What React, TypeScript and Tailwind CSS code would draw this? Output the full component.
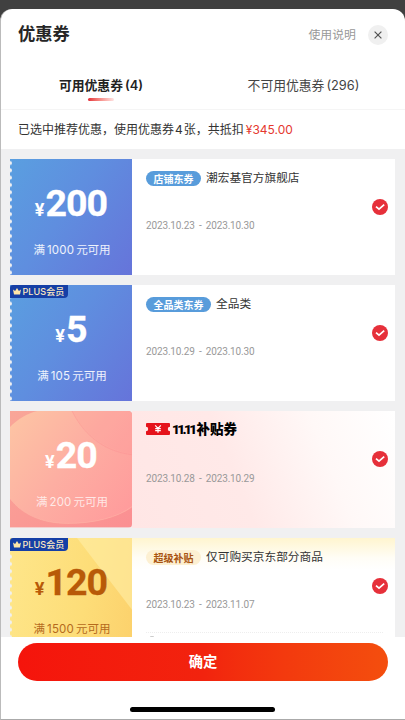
import React from 'react';
import clsx from 'clsx';

type Theme = 'blue' | 'pink' | 'gold';

interface Coupon {
  id: number;
  theme: Theme;
  plus?: boolean;
  amount: string;
  limit: string;
  tag?: string;
  title: string;
  start: string;
  end: string;
}

const coupons: Coupon[] = [
  { id: 1, theme: 'blue', amount: '200', limit: '1000', tag: '店铺东券', title: '潮宏基官方旗舰店', start: '2023.10.23', end: '2023.10.30' },
  { id: 2, theme: 'blue', plus: true, amount: '5', limit: '105', tag: '全品类东券', title: '全品类', start: '2023.10.29', end: '2023.10.30' },
  { id: 3, theme: 'pink', amount: '20', limit: '200', title: '补贴券', start: '2023.10.28', end: '2023.10.29' },
  { id: 4, theme: 'gold', plus: true, amount: '120', limit: '1500', tag: '超级补贴', title: '仅可购买京东部分商品', start: '2023.10.23', end: '2023.11.07' },
];

const stubStyles: Record<Theme, string> = {
  blue: 'bg-linear-[125deg,#5a9fe0_0%,#5f8edf_45%,#6674da_100%] text-white',
  pink: 'text-white',
  gold: 'bg-linear-[100deg,#fee68a_0%,#fddd78_60%,#fcd16c_100%] text-[#b85a08]',
};

const limitStyles: Record<Theme, string> = {
  blue: 'text-white/90',
  pink: 'text-white/75',
  gold: 'text-[#b56a1c]',
};

const bodyStyles: Record<Theme, string> = {
  blue: 'bg-white',
  pink: 'bg-linear-[68deg,#ffe6e5_0%,#ffe9e8_40%,#fff8f7_72%,#ffffff_100%]',
  gold: 'bg-linear-[180deg,#fff5cf_0px,#fffdf6_20px,#ffffff_32px]',
};

const PinkPattern: React.FC = () => (
  <svg className="absolute inset-0 h-full w-full" viewBox="0 0 122 117" preserveAspectRatio="none">
    <defs>
      <linearGradient id="pinkBase" x1="0" y1="0" x2="1" y2="1">
        <stop offset="0" stopColor="#f9a698" />
        <stop offset="1" stopColor="#fb8f92" />
      </linearGradient>
      <linearGradient id="pinkDisc" x1="0" y1="0.1" x2="1" y2="0.8">
        <stop offset="0" stopColor="#fdc4a4" />
        <stop offset="0.5" stopColor="#fdaea2" />
        <stop offset="1" stopColor="#ff9c9c" />
      </linearGradient>
    </defs>
    <rect width="122" height="117" fill="url(#pinkBase)" />
    <path d="M0 16C12 4 26-2 44-2H124V96C108 107 84 113 58 113C32 113 12 104 0 88Z" fill="url(#pinkDisc)" />
    <path d="M62 0C72 18 88 38 122 43V0Z" fill="#ff9095" opacity=".18" />
    <path d="M62 0C72 20 90 40 122 44" fill="none" stroke="#fb8a8e" strokeWidth=".7" opacity=".5" />
    <path d="M0 88C12 104 32 113 58 113C84 113 108 107 122 96" fill="none" stroke="#ffb9a8" strokeWidth="1" opacity=".5" />
  </svg>
);

const GoldPattern: React.FC = () => (
  <svg className="absolute inset-0 h-full w-full" viewBox="0 0 122 117" preserveAspectRatio="none">
    <path d="M67 0H122V72Z" fill="#ffeea6" opacity=".6" />
  </svg>
);

// perforated left edge of the stub
const Perforation: React.FC<{ theme: Theme }> = ({ theme }) => (
  <svg className="absolute top-0 left-0 h-full w-[3px]">
    <defs>
      <pattern id={`perf-${theme}`} width="3" height="7.3" patternUnits="userSpaceOnUse">
        <circle cx="0" cy="4" r="2" fill="#f0f0f1" />
      </pattern>
    </defs>
    <rect width="3" height="100%" fill={`url(#perf-${theme})`} />
  </svg>
);

const PlusBadge: React.FC = () => (
  <div className="absolute top-0 left-0 flex h-[13px] w-[57.5px] items-center rounded-tl-[3px] rounded-br-[4px] bg-[#153fa6] pl-[2.5px] text-[#ffe9c0]">
    <svg className="h-[7px] w-[8px] shrink-0" viewBox="0 0 8 7">
      <path d="M0 1.6L2.1 3L4 0L5.9 3L8 1.6L7 6.6H1Z" fill="#ffe6a8" />
    </svg>
    <span className="ml-[2px] text-[9px] leading-none font-medium tracking-[0.1px] whitespace-nowrap">PLUS会员</span>
  </div>
);

const TicketIcon: React.FC = () => (
  <svg className="h-[12px] w-[24px] shrink-0" viewBox="0 0 24 12">
    <path d="M1 0H23Q24 0 24 1V3.8A2.2 2.2 0 0 0 24 8.2V11Q24 12 23 12H1Q0 12 0 11V8.2A2.2 2.2 0 0 0 0 3.8V1Q0 0 1 0Z" fill="#e5131b" />
    <path d="M9.2 2.3L12 5.3L14.8 2.3M12 5.3V9.8M9.2 5.6H14.8M9.2 7.7H14.8" fill="none" stroke="#fff" strokeWidth="1.2" />
  </svg>
);

const CheckIcon: React.FC = () => (
  <svg className="h-4 w-4 shrink-0" viewBox="0 0 16 16">
    <circle cx="8" cy="8" r="8" fill="#e6303a" />
    <path d="M4 7.6L7 10.2L12.2 5.6" fill="none" stroke="#fff" strokeWidth="1.7" />
  </svg>
);

const CouponCard: React.FC<{ coupon: Coupon }> = ({ coupon }) => {
  const { theme, plus, amount, limit, tag, title, start, end } = coupon;

  return (
    <div className="flex h-[116.4px] w-[385px] shrink-0">
      <div className={clsx('relative flex w-[122px] shrink-0 flex-col items-center', stubStyles[theme])}>
        {theme === 'pink' && (
          <div className="absolute inset-0 overflow-hidden rounded-r-[4px]">
            <PinkPattern />
          </div>
        )}
        {theme === 'gold' && <GoldPattern />}
        {theme !== 'pink' && <Perforation theme={theme} />}
        {plus && <PlusBadge />}
        <div className="relative mt-[24px] flex h-[40px] items-baseline font-['Roboto'] font-bold">
          <span className="mr-[1px] text-[18px] leading-[40px]">¥</span>
          <span className="text-[37.5px] leading-[40px] tracking-[-0.9px] [-webkit-text-stroke:0.3px_currentColor]">{amount}</span>
        </div>
        <div className={clsx('relative mt-[18px] ml-[2px] text-[11.5px] leading-[18px] whitespace-nowrap', limitStyles[theme])}>
          满<span className="mx-[2px] tracking-[0.2px]">{limit}</span>元可用
        </div>
      </div>

      <div className={clsx('relative flex grow items-start pl-[14px]', bodyStyles[theme])}>
        <div className="grow">
          <div className="mt-[11px] flex h-[18px] items-center">
            {theme === 'pink' ? (
              <div className="-mt-[4px] flex items-center">
                <TicketIcon />
                <span className="ml-[2px] flex items-center font-black text-black">
                  <span className="font-['Roboto'] text-[13.5px] tracking-[-2.6px]">11.11</span>
                  <span className="ml-[2px] text-[13.5px]">{title}</span>
                </span>
              </div>
            ) : (
              <>
                <span
                  className={clsx(
                    'flex h-[15px] items-center rounded-full px-[7.5px] text-[10px] leading-none font-bold whitespace-nowrap',
                    theme === 'gold' ? 'bg-[#fdf0d2] text-[#a8530f]' : 'bg-[#589cdb] text-white',
                  )}
                >
                  {tag}
                </span>
                <span className="ml-[5px] text-[11.7px] whitespace-nowrap text-[#333]">{title}</span>
              </>
            )}
          </div>
          <div className="mt-[29.5px] flex font-['Roboto'] text-[10px] leading-[18px] tracking-[-0.15px] whitespace-nowrap text-[#999]">
            <span>{start}</span>
            <span className="w-[11px] text-center">-</span>
            <span>{end}</span>
          </div>
        </div>
        <div className="mt-[40px] mr-[7px]">
          <CheckIcon />
        </div>
        {theme === 'gold' && (
          <>
            <div className="absolute top-[94px] right-3 left-[14px] border-t border-dotted border-[#eee]" />
            <div className="absolute top-[98px] left-[18px] h-[2px] w-[4px] rounded-full bg-[#ccc]" />
          </>
        )}
      </div>
    </div>
  );
};

export default function App() {
  return (
    <div className="h-[720px] w-[405px] overflow-hidden bg-[#404040] pt-[9px] font-['Inter','Noto_Sans_CJK_SC',sans-serif]">
      <div className="flex h-[711px] flex-col overflow-hidden rounded-t-[12px] border-b border-l border-b-[#aaa] border-l-[#bbb] bg-white">
        <header className="flex h-[52px] shrink-0 items-center pr-[17px] pl-[17px]">
          <h1 className="-mt-[2px] grow text-[17.3px] font-bold text-[#262626]">优惠券</h1>
          <span className="text-[11.9px] text-[#999]">使用说明</span>
          <button className="ml-[12px] flex h-5 w-5 items-center justify-center rounded-full bg-[#f0f0f0]">
            <svg className="h-[8px] w-[8px]" viewBox="0 0 8 8">
              <path d="M.6.6L7.4 7.4M7.4.6L.6 7.4" stroke="#555" strokeWidth="1.2" />
            </svg>
          </button>
        </header>

        <nav className="flex h-[49px] shrink-0 border-b border-[#f5f5f5] text-[12.8px] whitespace-nowrap">
          <div className="relative flex w-[200px] justify-center pt-[15px] leading-5 font-semibold text-[#222]">
            可用优惠券<span className="ml-[2px]">(4)</span>
            <div className="absolute top-[37px] left-[87px] h-[3px] w-[26px] rounded-full bg-linear-to-r from-[#e22b38] to-[#fde3e3]" />
          </div>
          <div className="flex w-[204px] justify-center pt-[15px] pl-px leading-5 text-[#444]">
            不可用优惠券<span className="ml-[2px]">(296)</span>
          </div>
        </nav>

        <p className="flex h-[39px] shrink-0 items-center pl-[17px] text-[12px] whitespace-nowrap text-[#333]">
          已选中推荐优惠，使用优惠券<span className="mr-px ml-[1px]">4</span>张，共抵扣
          <span className="ml-[2px] text-[#e5392f]">¥345.00</span>
        </p>

        <main className="flex h-[488px] shrink-0 flex-col gap-[10px] overflow-hidden bg-[#f0f0f1] pt-[9.5px] pl-[9px]">
          {coupons.map((coupon) => (
            <CouponCard key={coupon.id} coupon={coupon} />
          ))}
        </main>

        <footer className="flex grow flex-col items-center bg-white pt-[6px]">
          <button className="h-[37.5px] w-[370px] rounded-full bg-linear-to-r from-[#f5140c] via-[#f2230e] to-[#f44e0e] text-[14.3px] font-bold text-white">确定</button>
          <div className="mt-[26px] mr-[2px] h-[5px] w-[145px] rounded-full bg-black" />
        </footer>
      </div>
    </div>
  );
}
